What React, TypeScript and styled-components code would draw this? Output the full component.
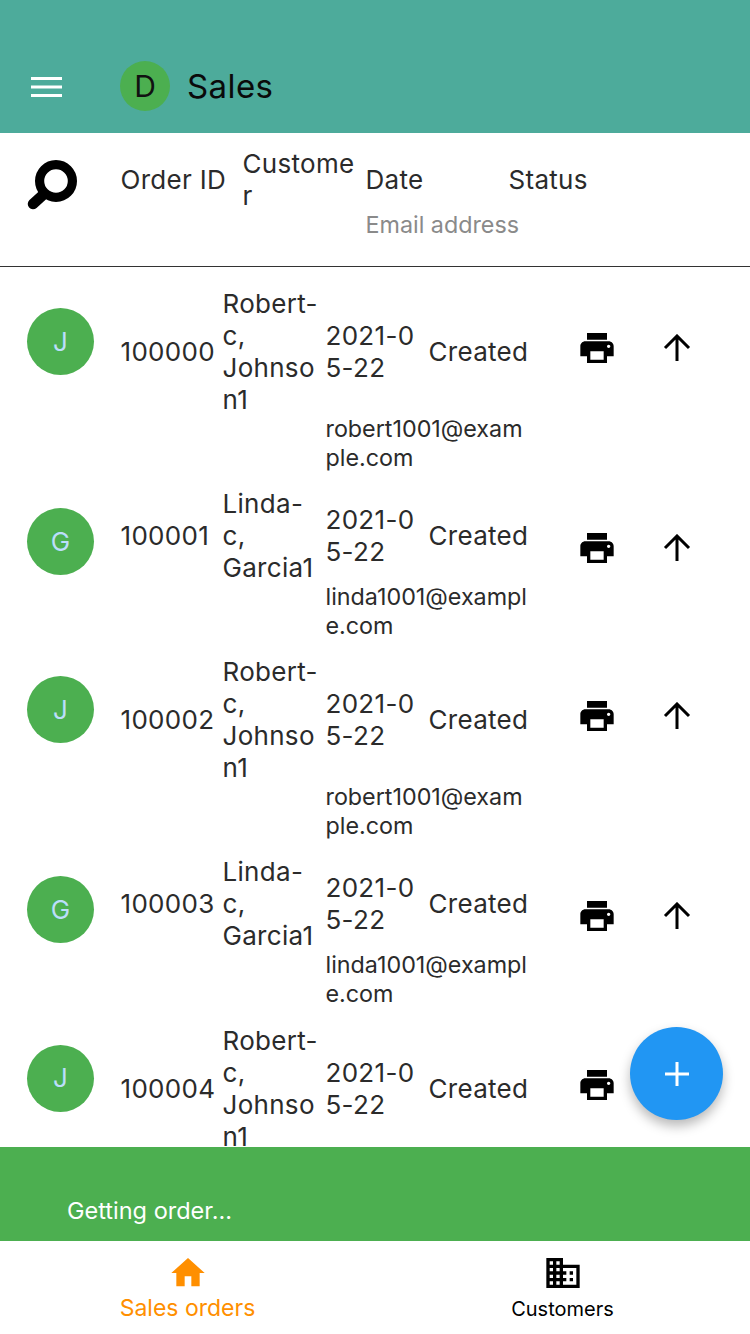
import React from 'react';
import styled, { createGlobalStyle } from 'styled-components';
import { MdPrint, MdHome, MdBusiness } from 'react-icons/md';

const GlobalStyle = createGlobalStyle`
html, body {
	margin: 0;
	padding: 0;
	background: #fff;
}
`

const Page = styled.div`
	position: relative;
	width: 750px;
	height: 1334px;
	display: flex;
	flex-direction: column;
	overflow: hidden;
	font-family: 'Inter', 'Roboto', sans-serif;
	font-size: 26px;
	line-height: 32px;
	letter-spacing: 0.3px;
	color: #2b2b2b;
`

const AppBar = styled.header`
	height: 133px;
	flex: none;
	box-sizing: border-box;
	padding: 61px 0 0 31px;
	display: flex;
	align-items: flex-start;
	background: #4dab9b;
`

const MenuIcon = styled.svg`
	width: 31px;
	height: 20px;
	margin-top: 16px;
	margin-right: 58px;
`

const AppLogo = styled.div`
	width: 50px;
	height: 50px;
	border-radius: 50%;
	background: #4caf50;
	color: #111;
	font-size: 30px;
	letter-spacing: 0;
	display: flex;
	align-items: center;
	justify-content: center;
	margin-right: 17px;
`

const AppTitle = styled.div`
	font-size: 33px;
	line-height: 50px;
	letter-spacing: 0.4px;
	color: #0a0a0a;
`

const FilterBar = styled.div`
	height: 134px;
	flex: none;
	box-sizing: border-box;
	border-bottom: 1px solid #333;
	padding: 15px 0 0 27px;
	display: grid;
	grid-template-columns: 94px 122px 123px 143px 1fr;
	grid-template-rows: 64px 32px;
`

const SearchIcon = styled.svg`
	grid-row: 1 / span 2;
	width: 50px;
	height: 50px;
	margin-top: 12px;
`

const HeaderLabel = styled.div`
	grid-row: 1;
	align-self: center;
	margin-left: -0.5px;
	white-space: pre-line;
`

const EmailHeader = styled.div`
	grid-column: 4 / span 2;
	grid-row: 2;
	margin: -3px 0 0 -0.5px;
	font-size: 23.3px;
	letter-spacing: 0;
	color: #8a8a8a;
`

const OrderList = styled.div`
	flex: 1;
	min-height: 0;
	overflow: hidden;
	padding-top: 21px;
`

const OrderRow = styled.div`
	display: grid;
	grid-template-columns: 94px 102px 103px 103px 148px 86px 1fr;
	grid-template-rows: auto auto;
	padding-left: 27px;
	padding-bottom: 16.15px;
`

const Avatar = styled.div`
	grid-column: 1;
	grid-row: 1 / span 2;
	width: 67px;
	height: 67px;
	margin-top: 20px;
	border-radius: 50%;
	background: #4caf50;
	color: #bbdefb;
	font-size: 26px;
	display: flex;
	align-items: center;
	justify-content: center;
`

const Cell = styled.div`
	grid-row: 1;
	align-self: center;
	margin-left: -0.5px;
	white-space: pre-line;
`

const IconSlot = styled.div`
	grid-row: 1 / span 2;
	height: 40px;
	margin-top: 40px;
	display: flex;
	align-items: center;
	color: #000;
	svg {
		display: block;
	}
`

const ArrowIcon = styled.svg`
	width: 28px;
	height: 28px;
`

const Email = styled.div`
	grid-column: 4 / span 2;
	grid-row: 2;
	margin: -2px 0 0 -0.5px;
	font-size: 23.3px;
	line-height: 29px;
	letter-spacing: 0;
	white-space: pre-line;
`

const Snack = styled.div`
	height: 94px;
	flex: none;
	box-sizing: border-box;
	padding: 48px 0 0 67px;
	background: #4caf50;
	color: #fff;
	font-size: 23.5px;
	line-height: 32px;
	letter-spacing: 0;
`

const BottomNav = styled.nav`
	height: 93px;
	flex: none;
	display: grid;
	grid-template-columns: 1fr 1fr;
	background: #fff;
`

const NavItem = styled.div<{ $active?: boolean }>`
	display: flex;
	flex-direction: column;
	align-items: center;
	padding-top: 12px;
	color: ${p => (p.$active ? '#ff8f00' : '#000')};
	font-size: ${p => (p.$active ? '23px' : '20px')};
	line-height: 30px;
	letter-spacing: 0;
	svg {
		display: block;
		margin-bottom: ${p => (p.$active ? '0' : '1px')};
	}
`

const Fab = styled.button`
	position: absolute;
	left: 630px;
	top: 1027px;
	width: 93px;
	height: 93px;
	padding: 0;
	border: 0;
	border-radius: 50%;
	background: #2196f3;
	box-shadow: 0 6px 12px rgba(0, 0, 0, 0.28);
	display: flex;
	align-items: center;
	justify-content: center;
`

type Order = {
	initial: string
	id: string
	name: string
	date: string
	email: string
	hideArrow?: boolean
}

const robert = { initial: 'J', name: 'Robert-\nc,\nJohnso\nn1', email: 'robert1001@exam\nple.com' }
const linda = { initial: 'G', name: 'Linda-\nc,\nGarcia1', email: 'linda1001@exampl\ne.com' }

const orders: Order[] = [
	{ ...robert, id: '100000', date: '2021-0\n5-22' },
	{ ...linda, id: '100001', date: '2021-0\n5-22' },
	{ ...robert, id: '100002', date: '2021-0\n5-22' },
	{ ...linda, id: '100003', date: '2021-0\n5-22' },
	{ ...robert, id: '100004', date: '2021-0\n5-22', hideArrow: true },
]

export default function App() {
	return (
		<Page>
			<GlobalStyle />
			<AppBar>
				<MenuIcon viewBox="0 0 31 20">
					<path d="M0 0h31v3H0zM0 8.5h31v3H0zM0 17h31v3H0z" fill="#fff" />
				</MenuIcon>
				<AppLogo>D</AppLogo>
				<AppTitle>Sales</AppTitle>
			</AppBar>
			<FilterBar>
				<SearchIcon viewBox="0 0 50 50">
					<circle cx="29" cy="21" r="16.4" fill="none" stroke="#000" strokeWidth="9.2" />
					<path d="M17 34L6 44" stroke="#000" strokeWidth="10.5" strokeLinecap="round" />
				</SearchIcon>
				<HeaderLabel>Order ID</HeaderLabel>
				<HeaderLabel>{'Custome\nr'}</HeaderLabel>
				<HeaderLabel>Date</HeaderLabel>
				<HeaderLabel>Status</HeaderLabel>
				<EmailHeader>Email address</EmailHeader>
			</FilterBar>
			<OrderList>
				{orders.map(order => (
					<OrderRow key={order.id}>
						<Avatar>{order.initial}</Avatar>
						<Cell>{order.id}</Cell>
						<Cell>{order.name}</Cell>
						<Cell>{order.date}</Cell>
						<Cell>Created</Cell>
						<IconSlot><MdPrint size={40} /></IconSlot>
						{order.hideArrow ? null : (
							<IconSlot>
								<ArrowIcon viewBox="0 0 28 28">
									<path d="M14 27V2M2 14L14 2l12 12" fill="none" stroke="#000" strokeWidth="3" />
								</ArrowIcon>
							</IconSlot>
						)}
						<Email>{order.email}</Email>
					</OrderRow>
				))}
			</OrderList>
			<Snack>Getting order...</Snack>
			<BottomNav>
				<NavItem $active>
					<MdHome size={40} />
					Sales orders
				</NavItem>
				<NavItem>
					<MdBusiness size={40} />
					Customers
				</NavItem>
			</BottomNav>
			<Fab aria-label="Add">
				<svg width="26" height="26" viewBox="0 0 26 26">
					<path d="M13 1v24M1 13h24" stroke="#fff" strokeWidth="3" />
				</svg>
			</Fab>
		</Page>
	)
}
